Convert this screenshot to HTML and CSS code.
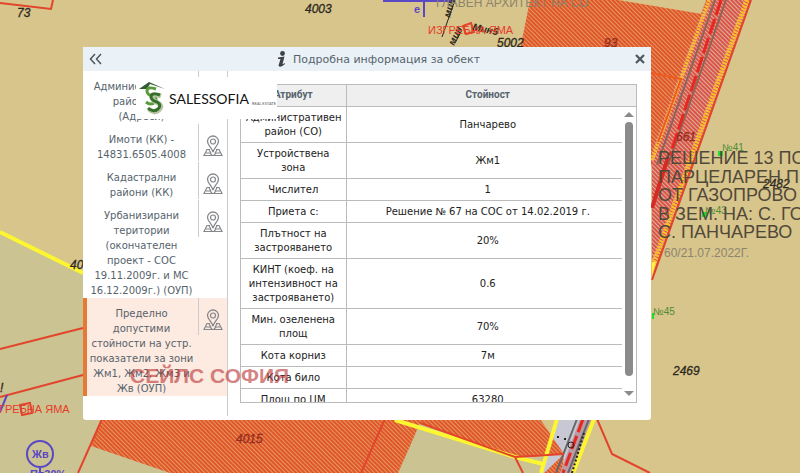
FILE: index.html
```html
<!DOCTYPE html>
<html lang="bg">
<head>
    <meta charset="UTF-8">
    <meta name="viewport" content="width=device-width, initial-scale=1.0">
    <title>Подробна информация за обект</title>
    <link rel="stylesheet" href="styles.css">
</head>
<body>
    <!-- Карта -->
    <svg class="map" viewBox="0 0 800 473" preserveAspectRatio="xMinYMin slice" aria-hidden="true">
        <defs>
            <pattern id="hatch" width="3" height="3" patternUnits="userSpaceOnUse" patternTransform="rotate(-45)">
                <rect width="3" height="3" fill="#e09a5c"/>
                <rect width="2" height="3" fill="#e2552c"/>
            </pattern>
            <pattern id="road-hatch" width="3" height="3" patternUnits="userSpaceOnUse" patternTransform="rotate(-45)">
                <rect width="3" height="3" fill="#d8b09c"/>
                <rect width="2" height="3" fill="#dc5448"/>
            </pattern>
        </defs>
        <rect width="800" height="473" fill="#d8c58c"/>
        <path d="M0 232L83 273L110 473H0Z" fill="#cbc392"/>
        <path d="M83 410H600V473H83Z" fill="#cbc392"/>

        <!-- Зони -->
        <path d="M530 0H618L702 14L706 4L640 200V60H518Z" fill="url(#hatch)"/>
        <path d="M706 0H751L652 280V150Z" fill="url(#road-hatch)"/>
        <path d="M709 0L652 160" stroke="#fbc02a" stroke-width="4" stroke-dasharray="2 1"/>
        <path d="M747 0L650 274" stroke="#fbc02a" stroke-width="5" stroke-dasharray="2 1"/>
        <path d="M751 0L652 280" class="line-red"/>
        <path d="M715 0L657 165M726 0L668 165" stroke="#8c6458" stroke-width="2"/>
        <path d="M721 0L670 155" stroke="#e82820" stroke-width="3" stroke-dasharray="16 4"/>
        <path d="M668 157L652 208" stroke="#d42c24" stroke-width="4"/>
        <path d="M652 73L681 79L658 142" class="line-orange"/>
        <path d="M652 262L656 262L652 276Z" fill="#fff04a"/>

        <path d="M101 419H420V424L398 473H170L91 446Z" fill="url(#hatch)"/>
        <path d="M395 419H540L564 454L515 458L420 423Z" fill="url(#hatch)"/>
        <path d="M420 423L399 473H548L541 464L515 458Z" fill="#cbc392"/>
        <path d="M540 419H558L552 438Z" fill="#d8c58c"/>
        <path d="M557 419H600V473H541L552 438Z" fill="#c8c8d4"/>
        <path d="M540 419L564 454L530 457V419Z" fill="url(#hatch)"/>
        <path d="M564 454L544 473H562Z" fill="url(#hatch)"/>
        <path d="M594 419L573 473H800V419Z" fill="#d8c58c"/>
        <path d="M580 419L560 473H572L593 419Z" fill="#b99ca4"/>
        <path d="M577 419L556 473M589 419L568 473" stroke="#666" stroke-width="2"/>
        <path d="M583 419L563 473" stroke="#e82820" stroke-width="3" stroke-dasharray="14 4"/>
        <path d="M395 420L515 457L543 464M557 419L541 473M594 419L573 473" class="line-yellow"/>
        <path d="M597 419L612 454L650 473" class="line-red"/>
        <circle cx="571" cy="445" r="3" fill="none" stroke="#222"/>
        <path d="M557 437h2M564 439h2M572 473l12-40" stroke="#222" stroke-width="2" stroke-dasharray="2 2"/>
        <path d="M420 423L515 457L564 454M515 457L523 473M385 419L361 473M102 419L78 473" class="line-red"/>

        <path d="M0 232L83 273" class="line-yellow"/>
        <path d="M0 349L83 328M0 397L83 375M0 3L51 9L53 0" class="line-red"/>
        <path d="M0 412L7 395M383 1H455M424 0V17" class="line-blue"/>
        <path d="M442 37L455 0M455 43L462 30" stroke="#222"/>
        <path d="M20 405l10-2 2 10-10 2ZM463 26l8-3 3 9-8 2Z" class="line-red"/>
        <circle cx="40" cy="454" r="13" class="line-blue"/>
        <path d="M40 468V473" class="line-blue"/>

        <!-- Надписи -->
        <g class="map-number">
            <text x="17" y="17">73</text>
            <text x="305" y="13">4003</text>
            <text x="497" y="47">5002</text>
            <text x="70" y="269">40</text>
            <text x="673" y="375">2469</text>
            <text x="763" y="188">2482</text>
            <text x="236" y="443" class="dark-red">4015</text>
            <text x="604" y="47" class="dark-red">93</text>
            <text x="676" y="141" class="dark-red">661</text>
            <text x="0" y="392">!</text>
        </g>
        <g class="map-small">
            <text x="450" y="18" transform="rotate(-75 450 18)">мин</text>
            <text x="454" y="46" transform="rotate(-65 454 46)">мин</text>
            <text x="472" y="30" transform="rotate(12 472 30)">Мин5</text>
        </g>
        <text x="436" y="7" class="map-grey">ГЛАВЕН АРХИТЕКТ НА СО</text>
        <text x="428" y="34" class="map-red">ИЗГРЕБНА ЯМА</text>
        <text x="-1" y="413" class="map-red">ГРЕБНА ЯМА</text>
        <text x="414" y="13" class="map-blue">e</text>
        <text x="32" y="458" class="map-blue">Жв</text>
        <text x="30" y="478" class="map-blue">П=30%</text>
        <g fill="#1be02c">
            <rect x="718" y="151" width="5" height="5"/>
            <rect x="702" y="212" width="5" height="5"/>
            <rect x="652" y="313" width="2" height="6"/>
        </g>
        <g class="map-green">
            <text x="722" y="151">№41</text>
            <text x="705" y="214">№43</text>
            <text x="653" y="315">№45</text>
        </g>
        <g class="map-title">
            <text x="658" y="164">РЕШЕНИЕ 13 ПО</text>
            <text x="658" y="183">ПАРЦЕЛАРЕН П</text>
            <text x="658" y="201">ОТ ГАЗОПРОВО</text>
            <text x="658" y="220">В ЗЕМ. НА: С. ГО</text>
            <text x="658" y="238">С. ПАНЧАРЕВО</text>
        </g>
        <text x="664" y="257" class="map-grey">60/21.07.2022Г.</text>
    </svg>

    <svg class="symbols" aria-hidden="true">
        <symbol id="pin" viewBox="0 0 20 22">
            <g fill="none" stroke="#85888a">
                <path d="M10 17C9 13 4.500 10 4.500 6.500A5.500 5.500 0 0 1 15.500 6.500C15.500 10 11 13 10 17Z" stroke-width="1.300"/>
                <circle cx="10" cy="6.500" r="2.500" stroke-width="1.200"/>
                <path d="M7 14.500H4L1 20.500H19L16 14.500H13M3 18H7L9 20M17 18H13L11 20M6 15L8 18M14 15L12 18" stroke-width="1.200"/>
            </g>
        </symbol>
    </svg>

    <main class="dialog">
        <header class="dialog-header">
            <button class="icon-button" type="button" aria-label="Скрий">
                <svg width="13" height="12" viewBox="0 0 13 12"><path d="M6 1L1.500 6L6 11M12 1L7.500 6L12 11" fill="none" stroke="#4d565c" stroke-width="1.500"/></svg>
            </button>
            <h1 class="dialog-title">
                <svg width="9" height="16" viewBox="0 0 9 16" aria-hidden="true"><circle cx="5.500" cy="2.500" r="2.400"/><path d="M1 6.500L7.500 5.500L5.500 13Q6 13.500 7.500 12L8 13Q3 17.500 1.500 14.500L3.500 8H1Z"/></svg>
                Подробна информация за обект
            </h1>
            <button class="icon-button" type="button" aria-label="Затвори">
                <svg width="10" height="10" viewBox="0 0 10 10"><path d="M1 1L9 9M9 1L1 9" stroke="#4d565c" stroke-width="2.200"/></svg>
            </button>
        </header>

        <div class="dialog-body">
            <nav class="layers">
                <a class="layer" href="#"><span class="layer-name">Административен район (СО)<br>(Адреси)</span><span class="layer-pin"><svg><use href="#pin"/></svg></span></a>
                <a class="layer" href="#"><span class="layer-name">Имоти (КК) - 14831.6505.4008</span><span class="layer-pin"><svg><use href="#pin"/></svg></span></a>
                <a class="layer" href="#"><span class="layer-name">Кадастрални райони (КК)</span><span class="layer-pin"><svg><use href="#pin"/></svg></span></a>
                <a class="layer" href="#"><span class="layer-name">Урбанизирани територии (окончателен проект - СОС 19.11.2009г. и МС 16.12.2009г.) (ОУП)</span><span class="layer-pin"><svg><use href="#pin"/></svg></span></a>
                <a class="layer active" href="#"><span class="layer-name">Пределно допустими стойности на устр. показатели за зони Жм1, Жм2, Жм3 и Жв (ОУП)</span><span class="layer-pin"><svg><use href="#pin"/></svg></span></a>
            </nav>

            <section class="details">
                <div class="details-scroll">
                    <table class="attributes">
                        <thead>
                            <tr><th>Атрибут</th><th>Стойност</th></tr>
                        </thead>
                        <tbody>
                            <tr><td>Административен район (СО)</td><td>Панчарево</td></tr>
                            <tr><td>Устройствена зона</td><td>Жм1</td></tr>
                            <tr><td>Числител</td><td>1</td></tr>
                            <tr><td>Приета с:</td><td>Решение № 67 на СОС от 14.02.2019 г.</td></tr>
                            <tr><td>Плътност на застрояването</td><td>20%</td></tr>
                            <tr><td>КИНТ (коеф. на интензивност на застрояването)</td><td>0.6</td></tr>
                            <tr><td>Мин. озеленена площ</td><td>70%</td></tr>
                            <tr><td>Кота корниз</td><td>7м</td></tr>
                            <tr><td>Кота било</td><td></td></tr>
                            <tr><td>Площ по ЦМ</td><td>63280</td></tr>
                        </tbody>
                    </table>
                </div>
                <div class="scrollbar" aria-hidden="true">
                    <span class="arrow-up"></span>
                    <span class="thumb"></span>
                    <span class="arrow-down"></span>
                </div>
            </section>
        </div>

        <div class="logo">
            <svg width="27" height="34" viewBox="0 0 27 34" aria-hidden="true">
                <path d="M0 8L10 1L26 8L11 3L8 8Z" fill="#355a35"/>
                <path d="M17 8Q8 5 8 10Q8 14 14 15Q19 17 16 21Q12 25 7 21" fill="none" stroke="#5b9a3c" stroke-width="3"/>
                <path d="M22 15Q13 12 13 17Q14 20 19 22Q24 25 20 29Q15 33 10 28" fill="none" stroke="#b9c4a4" stroke-width="5"/>
                <path d="M21 14Q12 11 12 16Q13 20 18 21Q23 24 19 28Q14 32 9 27" fill="none" stroke="#34702a" stroke-width="3"/>
            </svg>
            <span class="logo-name">SALESSOFIA</span>
            <span class="logo-tag">REAL ESTATE</span>
        </div>
        <div class="watermark">СЕЙЛС СОФИЯ</div>
    </main>
</body>
</html>
```

FILE: styles.css
```css
* {
    box-sizing: border-box;
}
body {
    margin: 0;
    min-height: 100vh;
    overflow: hidden;
    background: #d8c58c;
    font-family: "DejaVu Sans", Verdana, sans-serif;
}

/* Карта */
.map {
    position: absolute;
    top: 0;
    left: 0;
    width: 100%;
    height: 100vh;
    font-family: "Liberation Sans", Arial, sans-serif;
}
.symbols {
    display: none;
}
.line-red,
.line-orange,
.line-yellow,
.line-blue {
    fill: none;
    stroke-width: 2;
}
.line-red {
    stroke: #e2442c;
}
.line-orange {
    stroke: #ee5a1e;
}
.line-yellow {
    stroke: #fdf631;
    stroke-width: 4;
}
.line-blue {
    stroke: #5b48c4;
}
.map-number {
    font-size: 12px;
    font-style: italic;
    fill: #2c2820;
    stroke: #2c2820;
    stroke-width: 0.3;
}
.map-number .dark-red {
    fill: #962c1c;
    stroke: #962c1c;
}
.map-small {
    font-size: 10px;
    font-weight: bold;
    font-style: italic;
    fill: #2c2820;
}
.map-grey {
    font-size: 12px;
    fill: #8c846c;
}
.map-red {
    font-size: 11px;
    fill: #e63c28;
}
.map-blue {
    font-size: 11px;
    font-weight: bold;
    fill: #5b48c4;
}
.map-green {
    font-size: 10px;
    fill: #4c8c34;
}
.map-title {
    font-size: 18px;
    fill: #50493a;
}

/* Прозорец */
.dialog {
    position: absolute;
    top: 47px;
    left: 83px;
    width: 71%;
    padding-bottom: 4px;
    background: #fff;
    border-radius: 3px;
}
.dialog-header {
    display: flex;
    align-items: center;
    justify-content: space-between;
    height: 24px;
    padding: 0 6px;
    background: #eaf2f7;
    color: #56636c;
}
.dialog-title {
    display: flex;
    align-items: center;
    gap: 7px;
    margin: 0;
    padding-left: 20px;
    font-size: 11px;
    font-weight: normal;
}
.dialog-title svg {
    fill: #3c4246;
}
.icon-button {
    display: flex;
    padding: 0;
    border: 0;
    background: none;
    cursor: pointer;
}
.dialog-body {
    display: flex;
}
.layers {
    width: 145px;
    height: 345px;
    flex: none;
    border-right: 1px solid #ccc;
}
.layer {
    display: flex;
    align-items: flex-start;
    border-left: 4px solid transparent;
    color: #56636c;
    font-size: 10px;
    line-height: 15px;
    text-align: center;
    text-decoration: none;
}
.layer-name {
    flex: 1;
    padding: 8px 2px 0 0;
}
.layer-pin {
    display: flex;
    align-items: center;
    justify-content: center;
    width: 29px;
    height: 37px;
    padding-top: 6px;
    border-left: 1px solid #ccc;
}
.layer-pin svg {
    width: 20px;
    height: 22px;
}
.layer.active {
    border-left-color: #e57a35;
    background: #fdeae0;
}

/* Таблица */
.details {
    display: flex;
    flex: 1;
    height: 319px;
    margin: 13px 14px 0 12px;
    border: 1px solid #bbb;
    background: linear-gradient(#efefef 21px, #bbb 21px, #bbb 22px, #fff 22px);
}
.details-scroll {
    flex: 1;
    overflow: hidden;
}
.attributes {
    width: 100%;
    border-collapse: collapse;
    table-layout: fixed;
    color: #222;
    font-size: 10px;
    line-height: 14px;
    text-align: center;
}
.attributes th,
.attributes td {
    height: 22px;
    padding: 4px 5px 3px;
    border-bottom: 1px solid #bbb;
}
.attributes th {
    height: 21px;
    padding: 3px 5px;
    color: #56636c;
    font-family: Roboto, sans-serif;
}
.attributes th:first-child,
.attributes td:first-child {
    width: 105px;
    border-right: 1px solid #bbb;
}
.attributes th:last-child,
.attributes td:last-child {
    padding-left: 12px;
}
.scrollbar {
    display: flex;
    flex-direction: column;
    align-items: center;
    gap: 5px;
    width: 14px;
    padding: 27px 0 6px;
}
.thumb {
    flex: 1;
    width: 8px;
    margin-bottom: 10px;
    border-radius: 4px;
    background: #8b8b8b;
}
.arrow-up,
.arrow-down {
    border: 5px solid transparent;
}
.arrow-up {
    border-top: 0;
    border-bottom-color: #8b8b8b;
}
.arrow-down {
    border-bottom: 0;
    border-top-color: #8b8b8b;
}

/* Лого и воден знак върху прозореца */
.logo {
    position: absolute;
    top: 30px;
    left: 53px;
    display: flex;
    align-items: center;
    gap: 3px;
    width: 141px;
    height: 42px;
    padding-left: 3px;
    background: #fff;
    white-space: nowrap;
}
.logo-name {
    color: #111;
    font-family: Lato, sans-serif;
    font-size: 14px;
}
.logo-tag {
    padding-top: 10px;
    color: #555;
    font-family: Lato, sans-serif;
    font-size: 4px;
}
.watermark {
    position: absolute;
    top: 317px;
    left: 47px;
    color: #b83434;
    font-family: "Liberation Sans", Arial, sans-serif;
    font-size: 21px;
    font-weight: bold;
    opacity: 0.6;
}
```
